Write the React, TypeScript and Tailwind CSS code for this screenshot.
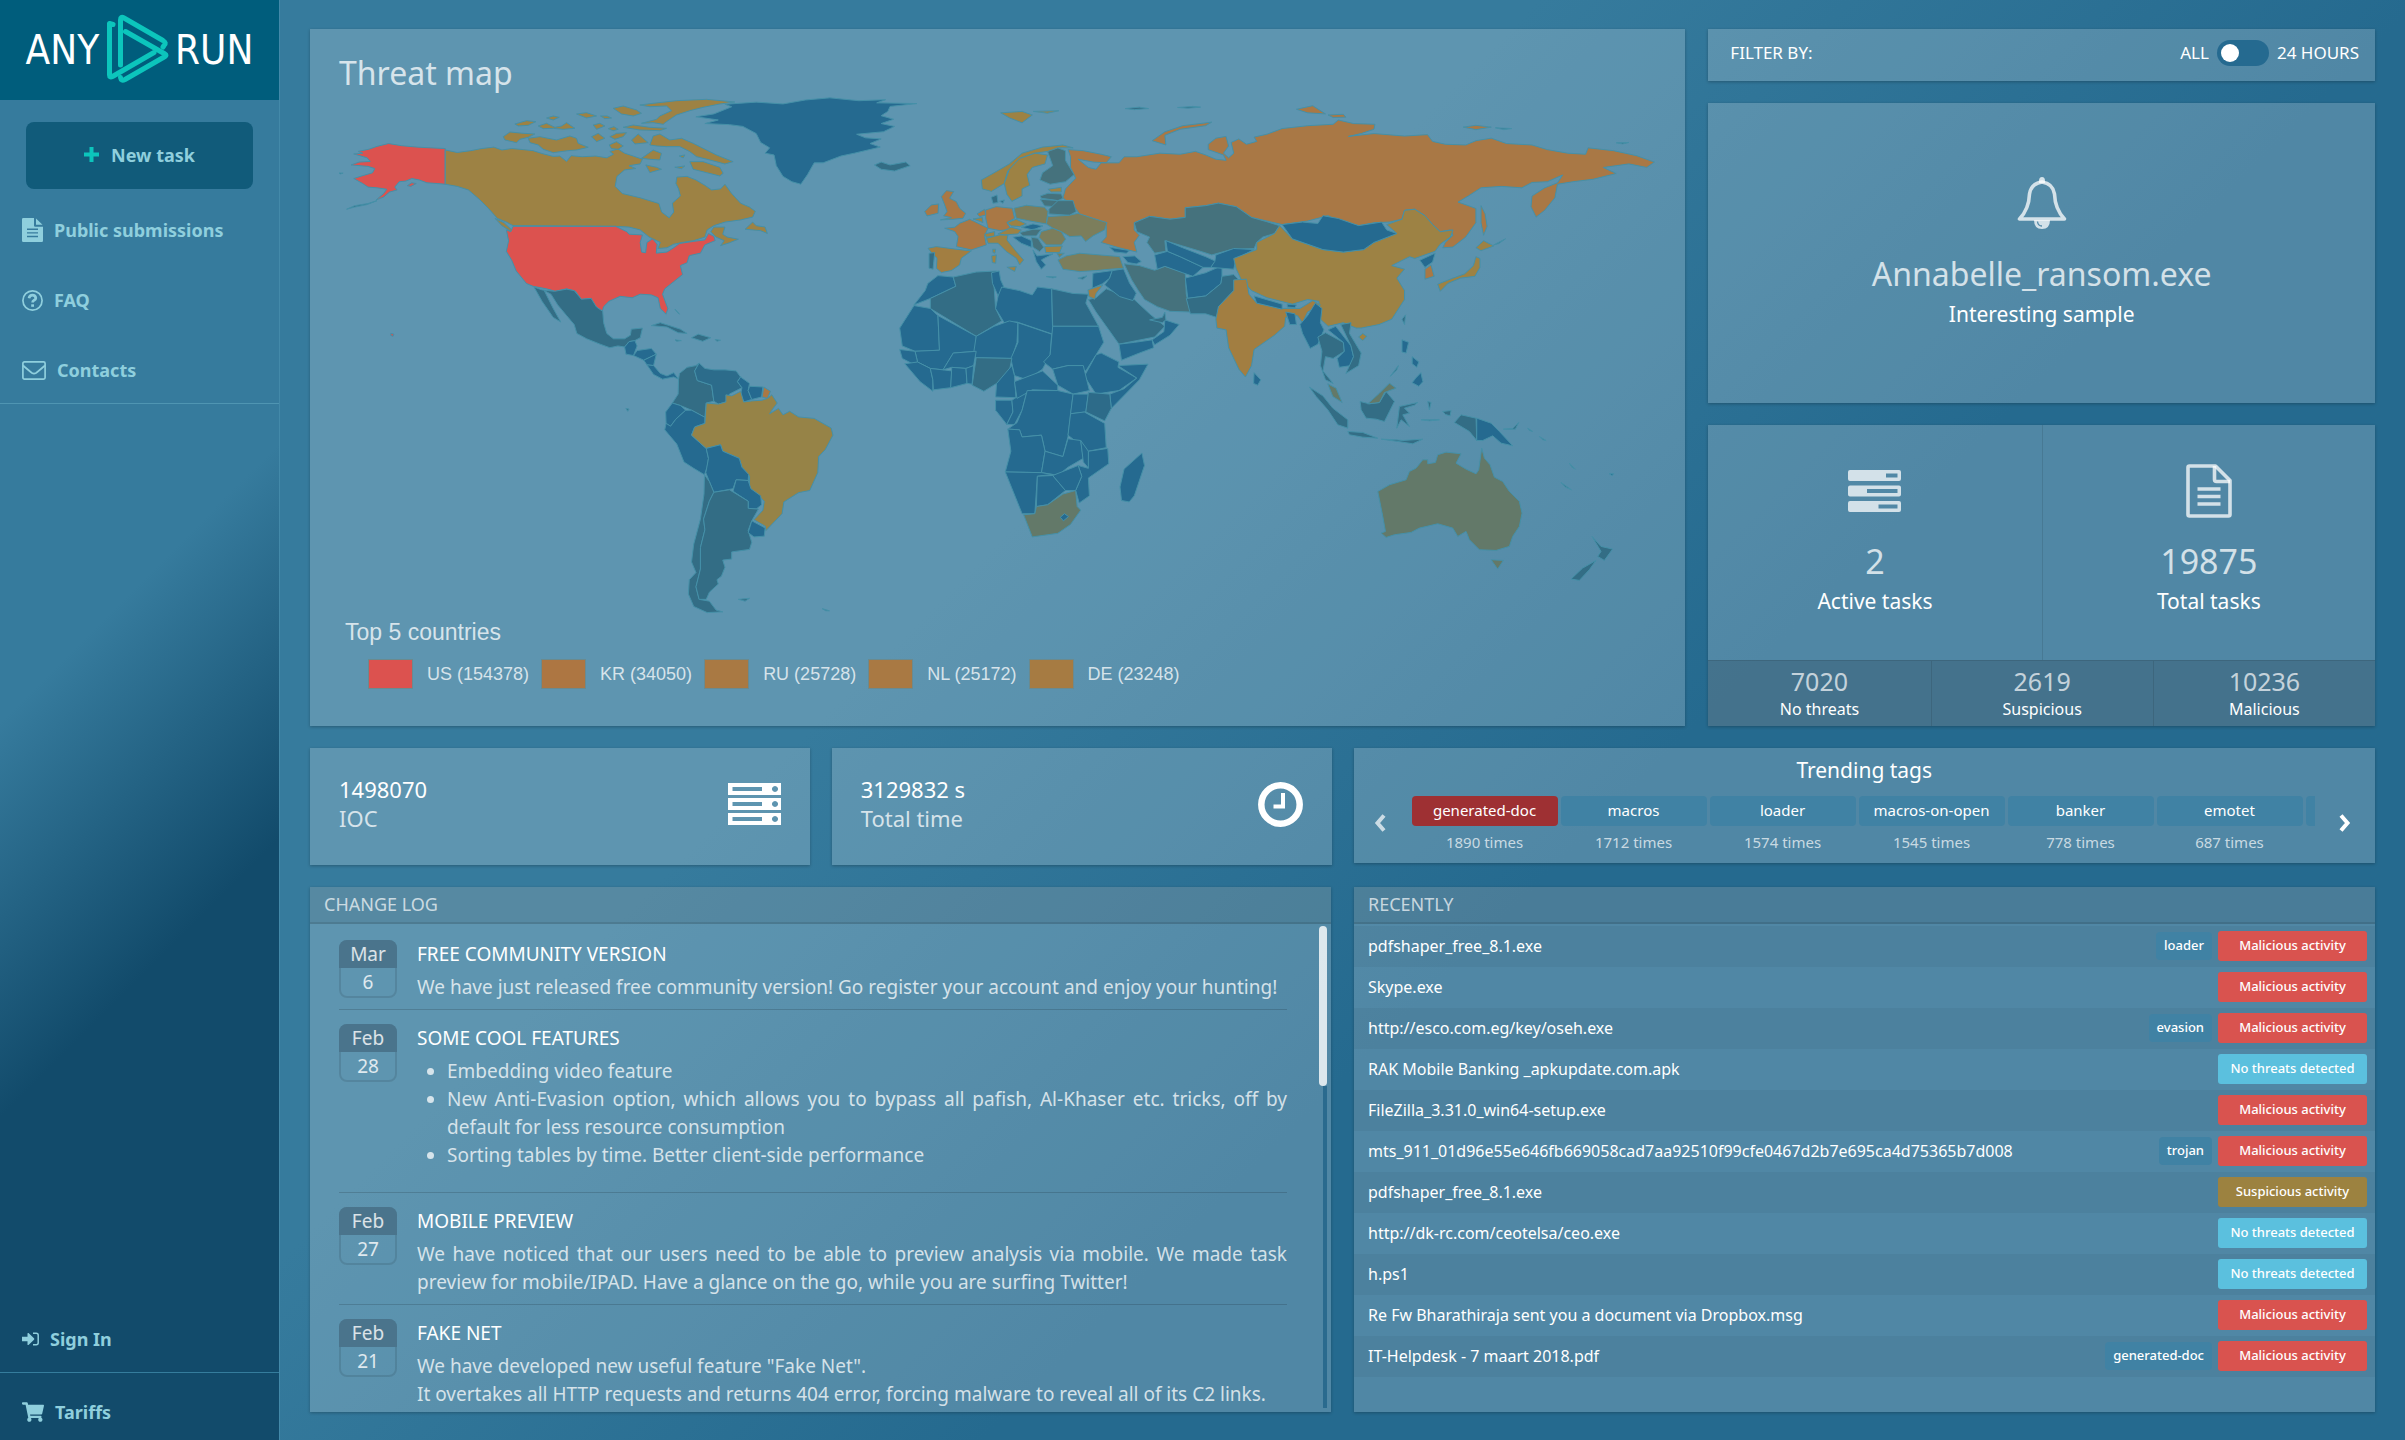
import { useState } from "react";
import type { ReactNode } from "react";
import { FaShoppingCart } from "react-icons/fa";

type Shape = [fill: string, d: string];

interface MapLayer {
  transform: string;
  shapes: Shape[];
}

interface LogEntry {
  month: string;
  day: number;
  title: string;
  body: ReactNode;
}

type Verdict = "malicious" | "suspicious" | "clean";

const NONE = "#256a90";
const LOW = "#336d85";
const MILD = "#45727d";
const SOME = "#637969";
const MID = "#7c7e5c";
const HIGH = "#9d8244";
const MORE = "#a27e41";
const HOT = "#a97845";
const TOP = "#dc524f";

// Each layer has its own drawing grid, the transform puts it on the world map
const MAP_LAYERS: MapLayer[] = [
  {
    // Americas
    transform: "translate(310 80) scale(0.44643 0.35714)",
    shapes: [
      [TOP, "M98,207 118,205 108,200 132,194 150,186 176,178 205,184 240,188 270,190 303,192 303,292 285,290 262,288 245,280 228,276 215,283 200,285 190,300 195,308 178,314 165,328 148,336 165,318 172,306 150,302 130,300 118,290 98,276 118,268 140,260 145,248 130,242 92,238 110,230 135,228 128,218Z"],
      [TOP, "M218,296 228,288 238,290 226,298Z"],
      [LOW, "M82,362 100,352 130,346 150,338 128,349 100,356Z"],
      [LOW, "M62,260 74,261 68,263Z"],
      [TOP, "M181,710 188,712 186,718 181,716Z"],
      [HIGH, "M303,196 330,203 360,198 385,192 412,188 430,196 452,192 478,195 500,198 520,206 545,214 560,213 575,228 585,212 610,215 640,213 665,218 680,208 672,200 690,193 705,205 722,212 745,222 740,235 715,240 730,248 705,252 688,270 684,298 700,318 740,330 782,346 788,370 805,386 815,370 812,345 830,325 826,305 820,290 822,272 845,270 865,280 885,295 900,308 920,305 930,292 945,318 965,345 985,356 998,368 992,384 965,392 930,398 905,408 890,420 885,440 860,450 835,455 815,460 800,470 780,472 785,455 760,440 740,420 715,412 685,410 455,408 440,398 420,388 400,360 380,335 355,308 330,298 303,292Z"],
      [HIGH, "M905,412 930,412 925,432 935,440 960,446 940,456 920,464 928,450 910,440 898,425Z"],
      [HIGH, "M975,418 992,398 1000,408 1020,412 1025,430 1010,422Z"],
      [HIGH, "M415,388 435,400 452,420 455,428 430,408Z"],
      [TOP, "M455,410 685,410 710,425 715,432 745,434 740,455 743,482 752,484 755,455 768,445 778,460 776,485 800,482 815,470 828,458 860,452 885,448 893,430 905,438 908,450 885,462 875,485 850,492 845,512 830,520 835,545 815,565 795,585 790,600 802,640 798,656 785,640 780,610 765,602 740,600 722,610 695,606 670,620 658,635 655,648 640,635 630,612 608,615 595,592 575,585 550,592 530,585 500,578 485,570 462,535 452,505 440,480 445,450 440,420 450,425Z"],
      [LOW, "M502,580 520,588 548,592 575,586 592,590 608,614 630,612 642,636 656,648 658,680 665,710 680,725 705,725 718,715 720,698 745,695 740,722 728,730 715,733 705,748 690,745 672,750 650,740 620,725 598,710 592,685 575,660 555,630 540,600 525,590 545,640 562,678 545,665 520,620Z"],
      [NONE, "M705,748 715,733 728,730 733,745 725,772 708,768Z"],
      [NONE, "M733,758 765,752 776,768 748,785 725,772Z"],
      [NONE, "M748,785 776,768 770,800 755,798Z"],
      [NONE, "M755,798 770,800 785,822 800,829 815,820 826,838 815,832 790,838 770,825Z"],
      [LOW, "M765,688 785,680 805,688 830,698 845,710 825,708 800,692Z"],
      [LOW, "M855,722 870,712 898,722 880,732Z"],
      [LOW, "M818,728 832,730 822,732Z"],
      [LOW, "M908,727 920,729 912,732Z"],
      [LOW, "M818,642 828,656 824,652Z"],
      [LOW, "M826,838 828,822 845,805 865,800 872,793 862,815 868,842 900,855 905,900 888,905 885,945 855,925 830,912 812,905 825,880Z"],
      ["#2c6c8b", "M872,793 885,808 905,812 930,812 955,815 965,832 958,845 968,862 940,880 932,902 915,908 905,900 900,855 868,842 862,815Z"],
      [NONE, "M965,832 985,850 982,870 990,895 972,902 965,880 968,862 958,845Z"],
      [NONE, "M985,858 1015,860 1012,888 990,895 982,870Z"],
      [HOT, "M1017,860 1032,872 1025,892 1013,888Z"],
      [NONE, "M812,905 830,912 842,925 820,950 808,970 798,962 797,930Z"],
      [NONE, "M842,925 855,925 885,945 885,962 862,972 855,995 875,1018 888,1032 893,1060 890,1085 884,1106 860,1088 838,1070 822,1020 795,980 798,962 808,970 820,950Z"],
      ["#968347", "M888,905 915,908 932,902 932,882 945,885 965,872 972,902 990,899 1013,897 1025,892 1035,882 1047,905 1035,925 1030,935 1050,920 1060,938 1075,928 1095,944 1130,948 1168,975 1172,995 1155,1035 1140,1055 1138,1100 1120,1150 1095,1156 1062,1182 1058,1215 1022,1262 1020,1250 995,1232 1015,1205 1018,1180 1005,1165 985,1145 985,1110 968,1085 962,1060 925,1040 920,1022 888,1032 875,1018 855,995 862,972 885,962Z"],
      [NONE, "M888,1032 920,1022 925,1040 962,1060 968,1085 983,1105 982,1122 955,1120 948,1145 905,1155 895,1125 887,1100 893,1060Z"],
      [NONE, "M955,1120 982,1122 988,1145 1010,1165 1012,1190 1000,1202 982,1200 982,1180 948,1152Z"],
      [LOW, "M884,1106 895,1125 905,1155 895,1180 882,1230 885,1260 875,1310 875,1370 865,1420 872,1455 895,1460 910,1485 925,1490 890,1492 860,1475 848,1440 850,1400 865,1380 855,1350 860,1300 875,1230 883,1160Z"],
      [LOW, "M905,1155 940,1148 982,1180 982,1200 1005,1202 990,1235 982,1262 990,1295 985,1315 945,1322 945,1342 925,1345 930,1365 922,1390 912,1400 915,1412 895,1435 888,1455 872,1455 865,1420 875,1370 875,1310 885,1260 882,1230 895,1180Z"],
      [NONE, "M990,1235 1020,1255 1018,1278 995,1280 982,1268Z"],
      [LOW, "M960,1455 985,1452 975,1460Z"],
      [LOW, "M1148,1481 1164,1487 1156,1487Z"],
      [NONE, "M865,103 905,95 945,75 930,68 1000,62 1060,67 1110,56 1165,50 1230,58 1290,55 1270,64 1360,66 1300,74 1295,88 1280,100 1308,110 1280,122 1310,130 1285,145 1225,152 1245,162 1280,165 1255,178 1278,188 1220,205 1190,213 1150,232 1130,232 1115,265 1100,292 1080,285 1060,270 1045,240 1040,210 1020,205 1030,190 1010,175 1000,150 970,130 940,125 885,122 915,112Z"],
      [LOW, "M1265,238 1280,230 1300,238 1335,230 1345,240 1310,255 1280,250Z"],
      [LOW, "M708,920 715,922 712,928Z"],
    ],
  },
  {
    // Canadian arctic
    transform: "translate(490 90) scale(0.33333)",
    shapes: [
      [HIGH, "M450,45 490,40 560,32 650,28 735,36 690,42 640,52 600,62 560,75 545,85 530,95 520,103 490,98 455,100 500,88 510,78 545,62 530,48 480,50Z"],
      [HIGH, "M370,55 400,48 440,60 455,70 430,78 395,72Z"],
      [HIGH, "M400,112 430,105 480,112 530,115 510,122 450,120Z"],
      [HIGH, "M40,140 60,126 100,130 135,132 115,142 90,148 80,158 45,150Z"],
      [HIGH, "M115,145 150,140 200,150 240,138 260,145 265,160 295,172 260,180 235,182 190,188 160,178 145,165 120,158Z"],
      [HIGH, "M75,102 110,92 138,95 115,106 85,108Z"],
      [HIGH, "M145,108 170,100 195,112 215,108 230,98 255,115 220,118 190,115 160,116Z"],
      [HIGH, "M170,84 190,78 208,82 190,90Z"],
      [HIGH, "M310,105 330,100 345,108 320,118Z"],
      [HIGH, "M260,72 290,68 320,78 290,84Z"],
      [HIGH, "M332,78 352,78 365,84 345,86Z"],
      [HIGH, "M355,116 372,110 385,118 370,122Z"],
      [HIGH, "M305,140 325,130 345,145 320,155Z"],
      [HIGH, "M360,140 380,130 410,128 400,140 375,148Z"],
      [HIGH, "M358,165 380,155 400,168 385,178 365,176Z"],
      [HIGH, "M425,150 445,132 460,145 475,158 435,162Z"],
      [HIGH, "M480,165 490,138 510,132 540,150 575,145 610,160 650,180 680,195 730,215 705,222 660,210 620,200 600,185 570,170 530,170 500,168Z"],
      [HIGH, "M600,215 640,215 690,232 700,250 690,258 650,248 610,238Z"],
      [HIGH, "M455,205 490,180 515,190 510,210 480,208Z"],
      [HIGH, "M468,225 500,232 515,238 480,248Z"],
      [HIGH, "M555,232 585,228 575,236Z"],
      [HIGH, "M568,198 585,195 580,204Z"],
    ],
  },
  {
    // Asia and Africa
    transform: "translate(900 80) scale(0.5102 0.35714)",
    shapes: [
      [HOT, "M330,195 360,198 395,208 415,215 405,232 380,230 350,222 370,245 385,250 395,232 430,232 440,215 465,215 510,205 550,208 580,200 600,210 620,222 640,225 635,210 605,195 605,180 620,163 640,158 645,185 635,205 645,218 655,205 650,175 665,165 680,180 700,172 695,160 720,152 750,136 800,128 850,124 860,112 890,122 932,124 930,138 905,150 880,158 930,150 990,157 1035,153 1045,172 1070,180 1110,182 1130,170 1160,163 1190,178 1240,182 1270,195 1310,205 1345,208 1350,190 1400,198 1445,212 1480,230 1465,245 1430,235 1405,240 1380,245 1405,262 1360,278 1320,285 1290,292 1285,330 1265,365 1248,384 1238,355 1240,325 1265,302 1290,288 1300,266 1270,285 1240,287 1220,302 1180,298 1140,302 1115,325 1095,342 1115,352 1130,360 1130,400 1110,440 1085,468 1065,470 1070,455 1085,435 1080,420 1060,425 1045,405 1030,380 1010,362 990,365 985,390 960,398 930,400 900,408 860,395 840,380 800,395 750,405 720,395 690,385 660,355 625,345 600,352 560,358 560,385 530,390 490,382 460,400 460,420 470,435 460,455 465,482 430,470 395,455 405,440 405,410 380,400 355,380 345,360 320,330 325,305 345,275 335,245 335,215Z"],
      [HOT, "M1140,352 1148,375 1152,410 1145,435 1140,400Z"],
      [HOT, "M495,170 520,145 555,128 612,118 600,128 550,138 520,155 522,182Z"],
      [HIGH, "M198,92 240,88 260,98 240,120 215,106Z"],
      [HIGH, "M262,88 312,86 290,93Z"],
      [HOT, "M778,82 810,72 835,95 800,92Z"],
      [HOT, "M840,98 870,96 875,104 850,105Z"],
      [HOT, "M1105,132 1130,127 1160,132 1130,139Z"],
      [LOW, "M1168,134 1200,136 1185,139Z"],
      [LOW, "M1405,176 1430,175 1418,179Z"],
      [LOW, "M442,80 470,76 488,80 460,83Z"],
      [LOW, "M545,77 575,74 590,76 565,79Z"],
      [MILD, "M290,200 310,190 325,198 325,225 342,265 325,285 295,292 275,280 280,260 300,240Z"],
      [HIGH, "M160,280 185,260 215,235 240,205 280,188 320,182 340,190 310,190 290,200 265,205 235,220 212,255 205,290 180,312 162,305Z"],
      [HIGH, "M205,290 215,250 235,220 265,205 290,210 285,235 260,245 250,265 255,295 240,305 240,325 220,340 210,320Z"],
      [MILD, "M460,400 490,382 530,390 560,385 560,358 600,352 625,345 660,355 690,385 720,397 745,408 735,430 712,440 700,455 695,472 650,475 612,490 590,480 555,465 520,450 522,480 500,485 485,455 490,440 465,425Z"],
      [LOW, "M370,615 385,610 405,585 460,615 490,655 520,690 500,720 430,740 410,700 385,650Z"],
      [NONE, "M430,740 460,735 495,728 498,750 470,765 435,785Z"],
      [NONE, "M520,672 548,685 530,715 500,742 495,728 518,705Z"],
      [LOW, "M490,672 515,665 520,650 522,672 515,680Z"],
      [MILD, "M440,515 470,520 500,533 520,522 560,540 562,600 570,650 530,648 505,635 480,615 468,590 455,560Z"],
      [NONE, "M560,555 600,540 632,520 632,550 630,570 600,605 565,612Z"],
      [NONE, "M500,490 525,480 550,495 595,525 575,550 555,540 520,522 505,530Z"],
      [NONE, "M522,450 555,470 600,495 620,508 610,525 595,525 550,495 525,480Z"],
      [NONE, "M620,490 655,472 695,475 660,500 655,530 610,525 618,508Z"],
      [LOW, "M562,612 600,605 630,570 632,550 655,545 665,560 655,590 625,635 628,668 600,655 570,655Z"],
      [HIGH, "M655,500 700,475 700,455 735,430 745,408 770,445 830,475 870,482 910,475 930,455 975,430 955,405 985,390 990,365 1010,362 1030,380 1045,405 1060,425 1085,420 1080,440 1060,460 1050,480 1010,500 1000,495 965,520 990,530 975,555 990,590 990,615 965,670 940,685 905,695 895,695 870,680 840,690 825,670 822,620 800,615 770,628 720,610 690,590 670,560 660,530Z"],
      [NONE, "M750,405 790,398 820,402 830,380 860,388 900,408 945,398 955,420 975,430 930,455 910,475 870,482 830,475 770,445Z"],
      [HIGH, "M900,720 908,710 916,718 908,730Z"],
      [MORE, "M655,560 680,558 685,600 700,625 750,640 760,640 785,640 810,618 825,630 800,650 790,680 780,660 757,665 755,690 735,715 695,755 690,800 678,832 665,810 645,750 640,700 622,695 620,670 625,635 655,590Z"],
      [NONE, "M695,605 750,628 750,642 700,625Z"],
      [NONE, "M760,628 778,630 775,638 760,636Z"],
      [NONE, "M757,650 775,655 778,685 765,685Z"],
      [NONE, "M785,685 800,660 815,625 828,640 825,680 832,700 820,740 805,752 790,710Z"],
      [LOW, "M820,720 835,708 870,735 872,760 850,780 835,775 830,815 850,850 835,840 825,800 828,760Z"],
      [NONE, "M840,700 855,690 885,745 890,775 885,800 862,805 858,780 872,760 870,735Z"],
      [LOW, "M865,685 885,680 882,710 905,765 900,800 875,822 890,775 885,745Z"],
      [NONE, "M695,820 708,840 702,855 694,850Z"],
      [LOW, "M985,670 992,658 990,685Z"],
      [NONE, "M985,728 998,735 993,765 985,762Z"],
      [NONE, "M1005,775 1018,790 1014,805 1005,795Z"],
      [NONE, "M1012,835 1022,820 1026,845 1018,858 1005,848Z"],
      [LOW, "M962,830 978,800 975,812Z"],
      [NONE, "M1020,505 1050,485 1045,510 1030,525Z"],
      [HOT, "M1030,530 1042,518 1048,550 1030,558Z"],
      [HIGH, "M1130,495 1138,500 1138,525 1128,550 1100,555 1075,570 1060,592 1055,572 1085,555 1108,543 1125,520Z"],
      [HIGH, "M1130,470 1145,450 1165,465 1140,478Z"],
      [LOW, "M1165,462 1188,445 1175,458Z"],
      [NONE, "M75,548 105,552 110,578 60,612 28,630 50,590 55,570Z"],
      [LOW, "M105,552 150,538 190,535 185,575 188,640 200,675 150,718 60,640 60,612 110,578Z"],
      [NONE, "M180,540 195,535 198,560 205,582 193,605 182,570Z"],
      [NONE, "M200,580 235,590 260,602 270,580 298,585 300,712 230,678 205,680 188,640 193,605Z"],
      ["#2d6b89", "M298,585 340,598 370,600 365,625 390,690 300,690Z"],
      [NONE, "M0,695 28,632 60,640 75,660 78,757 30,760 5,745Z"],
      [NONE, "M75,660 150,718 150,760 105,765 85,812 60,808 35,790 30,760 78,757Z"],
      [NONE, "M150,718 185,690 215,675 232,680 230,735 220,780 150,778 145,765Z"],
      [NONE, "M232,680 298,712 295,770 280,810 250,840 225,828 218,780 232,735Z"],
      [NONE, "M300,690 390,690 400,735 385,770 365,815 330,800 300,810 282,790 295,770Z"],
      [NONE, "M395,765 430,790 428,805 465,835 430,870 385,880 362,830 385,770Z"],
      [NONE, "M428,800 487,796 470,840 415,920 412,880 440,865 465,835Z"],
      [NONE, "M0,755 30,760 35,790 25,795 5,780Z"],
      [NONE, "M10,795 35,790 60,808 65,840 65,872 40,845Z"],
      [NONE, "M60,808 85,812 102,815 100,862 66,868 65,840Z"],
      [NONE, "M85,812 105,765 150,760 145,800 130,808 102,805Z"],
      [NONE, "M102,805 130,808 132,850 100,862Z"],
      [NONE, "M130,808 145,800 142,852 132,850Z"],
      [LOW, "M150,778 220,780 215,815 190,850 165,872 142,855Z"],
      [NONE, "M190,850 220,800 225,828 228,890 188,888Z"],
      [NONE, "M188,897 220,897 222,930 210,965 188,925Z"],
      [NONE, "M220,897 250,870 240,925 225,965 210,965 222,930Z"],
      [NONE, "M225,845 280,815 310,855 310,870 260,868 230,892Z"],
      [NONE, "M300,810 330,800 360,800 372,870 340,880 310,855Z"],
      [NONE, "M250,870 310,870 340,880 335,940 330,1000 320,1055 285,1040 278,995 240,1000 235,980 212,978 230,960 240,925Z"],
      [NONE, "M340,880 370,880 365,930 335,935Z"],
      ["#2d6b89", "M370,875 412,880 415,920 402,955 365,930Z"],
      [NONE, "M335,935 362,930 402,962 405,1030 370,1040 330,995Z"],
      [NONE, "M212,978 235,980 240,1000 278,995 285,1040 278,1100 207,1098 218,1040Z"],
      [NONE, "M285,1040 320,1055 330,1005 355,1010 360,1060 330,1085 310,1108 278,1100Z"],
      [NONE, "M355,1010 370,1040 372,1090 360,1070Z"],
      [NONE, "M370,1040 408,1032 410,1075 370,1115 372,1165 352,1185 345,1150 357,1110 350,1080 370,1088Z"],
      [NONE, "M207,1098 278,1100 300,1105 270,1110 265,1215 240,1215Z"],
      [NONE, "M270,1110 300,1108 325,1150 290,1190 268,1195Z"],
      [NONE, "M300,1108 350,1080 357,1110 345,1150 325,1150Z"],
      [SOME, "M243,1218 265,1215 268,1195 290,1190 320,1160 345,1150 348,1195 355,1205 335,1245 310,1270 260,1280Z"],
      [NONE, "M315,1225 323,1215 331,1223 321,1235Z"],
      [NONE, "M475,1045 480,1080 460,1165 450,1182 435,1178 432,1140 440,1090Z"],
    ],
  },
  {
    // Europe and the Levant
    transform: "translate(920 150) scale(0.33333)",
    shapes: [
      [LOW, "M215,142 232,135 235,158 220,160Z"],
      [LOW, "M240,154 254,150 250,160Z"],
      [HIGH, "M385,118 425,112 425,126 395,126Z"],
      [MILD, "M362,138 385,130 425,132 430,145 415,152 365,145Z"],
      [MILD, "M362,148 415,152 405,170 375,168Z"],
      [MILD, "M388,178 415,152 460,152 470,185 450,196 388,192Z"],
      [MID, "M283,175 320,166 375,172 385,185 380,222 340,215 290,205Z"],
      [HOT, "M198,180 230,170 278,175 285,205 262,218 275,238 240,242 205,235 198,205Z"],
      [HOT, "M172,192 195,178 198,195 180,200Z"],
      [HIGH, "M160,207 188,203 190,218Z"],
      [HOT, "M75,235 105,232 120,220 150,208 165,215 205,235 195,258 200,285 155,300 110,290 115,260 105,245Z"],
      [MORE, "M25,295 50,290 110,298 155,303 125,325 120,345 95,362 65,368 50,355 52,325 35,308Z"],
      [LOW, "M28,310 45,308 40,358 28,355Z"],
      [HOT, "M62,210 95,203 72,198 82,185 75,165 65,140 80,122 102,125 90,145 110,155 120,175 138,190 130,205 100,208Z"],
      [HOT, "M15,185 35,165 57,162 55,190 22,198Z"],
      [HIGH, "M195,252 225,245 225,258 200,262Z"],
      [HIGH, "M235,252 275,232 305,240 295,252 255,255Z"],
      [HIGH, "M262,218 290,208 320,222 300,230 275,228Z"],
      [HIGH, "M200,265 240,255 265,256 262,270 290,305 312,330 300,345 290,325 260,305 235,280 205,280Z"],
      [HIGH, "M262,352 290,350 285,365Z"],
      [HIGH, "M216,318 230,315 228,340 218,338Z"],
      [HIGH, "M219,298 228,298 226,310 220,308Z"],
      [NONE, "M305,232 340,222 370,228 340,240Z"],
      [MILD, "M300,248 340,238 365,238 350,258 310,258Z"],
      [MID, "M365,245 400,235 425,245 438,268 425,285 380,285 358,262Z"],
      [HIGH, "M375,290 428,288 420,308 378,308Z"],
      [NONE, "M280,262 305,258 335,272 335,292 305,280Z"],
      [MILD, "M335,262 355,265 372,292 360,305 340,292Z"],
      [NONE, "M340,300 352,318 400,312 380,322 365,330 378,345 365,358 350,335Z"],
      [MID, "M385,200 450,196 475,190 520,205 562,218 555,240 520,258 498,275 485,258 450,260 425,245 400,235 380,222Z"],
      [MID, "M415,330 440,318 480,310 540,315 600,320 612,355 570,358 530,362 480,365 430,358Z"],
      [MID, "M412,310 434,310 419,322Z"],
      [NONE, "M570,292 630,302 620,310 585,306Z"],
      [NONE, "M610,320 645,318 665,335 650,342 625,338Z"],
      [LOW, "M380,380 410,381 400,384Z"],
      [LOW, "M475,385 502,378 490,388Z"],
      [NONE, "M520,370 578,362 570,385 548,402 518,415Z"],
      ["#2a6b8d", "M578,362 612,357 630,400 650,430 640,452 600,440 555,405 570,385Z"],
      [MORE, "M505,420 550,405 530,430 525,448 508,440Z"],
    ],
  },
  {
    // Oceania
    transform: "translate(1280 370) scale(0.33333)",
    shapes: [
      [LOW, "M90,52 130,78 160,115 205,150 205,175 175,165 145,120 110,80Z"],
      [LOW, "M205,185 250,188 295,205 250,202 210,195Z"],
      [LOW, "M305,208 350,210 370,212 430,208 400,222 350,214Z"],
      [LOW, "M242,95 270,102 300,98 320,65 345,95 330,125 315,155 290,148 260,145 245,120Z"],
      [SOME, "M265,102 300,70 330,40 350,55 315,68 300,98Z"],
      [SOME, "M145,42 170,55 188,98 160,80Z"],
      [LOW, "M352,175 360,110 415,98 405,106 375,115 390,130 370,135 390,170 365,150Z"],
      [LOW, "M445,95 455,98 450,120Z"],
      [LOW, "M425,150 480,150 450,153Z"],
      [LOW, "M490,125 515,122 512,138 498,134Z"],
      [LOW, "M525,158 545,135 590,145 592,212 570,185Z"],
      [NONE, "M592,145 635,160 660,185 700,228 665,220 640,198 610,212 592,212Z"],
      [LOW, "M672,178 700,176 718,158 708,178Z"],
      [LOW, "M745,175 760,185 750,182Z"],
      [LOW, "M780,200 800,212 790,210Z"],
      [LOW, "M845,338 876,360 858,352Z"],
      [LOW, "M870,280 888,298 878,292Z"],
      [NONE, "M990,312 1003,312 998,318Z"],
      [SOME, "M295,365 330,345 380,330 390,305 410,295 430,270 445,270 445,282 468,278 475,255 500,247 545,252 530,280 560,298 590,312 598,300 607,235 615,265 632,285 645,322 670,335 690,365 720,395 728,430 720,470 700,500 690,530 650,542 600,540 570,510 560,485 535,500 520,475 475,462 420,475 395,488 345,495 320,503 305,490 318,485 310,440Z"],
      [SOME, "M635,570 672,572 655,598Z"],
      [LOW, "M938,500 965,530 1000,538 975,572 955,560 965,545Z"],
      [LOW, "M950,572 930,600 900,632 875,628 910,595Z"],
    ],
  },
];

const TOP_COUNTRIES = [
  { label: "US (154378)", swatch: "bg-[#dc524f]" },
  { label: "KR (34050)", swatch: "bg-[#ad7642]" },
  { label: "RU (25728)", swatch: "bg-[#a97943]" },
  { label: "NL (25172)", swatch: "bg-[#a97943]" },
  { label: "DE (23248)", swatch: "bg-[#a67b42]" },
];

const TRENDING = [
  { tag: "generated-doc", times: 1890 },
  { tag: "macros", times: 1712 },
  { tag: "loader", times: 1574 },
  { tag: "macros-on-open", times: 1545 },
  { tag: "banker", times: 778 },
  { tag: "emotet", times: 687 },
];

const VERDICTS: Record<Verdict, { label: string; className: string }> = {
  malicious: { label: "Malicious activity", className: "bg-[#d9534f]" },
  suspicious: { label: "Suspicious activity", className: "bg-[#9c8240]" },
  clean: { label: "No threats detected", className: "bg-[#5bc0de]" },
};

const RECENT: { name: string; tag?: string; verdict: Verdict }[] = [
  { name: "pdfshaper_free_8.1.exe", tag: "loader", verdict: "malicious" },
  { name: "Skype.exe", verdict: "malicious" },
  { name: "http://esco.com.eg/key/oseh.exe", tag: "evasion", verdict: "malicious" },
  { name: "RAK Mobile Banking _apkupdate.com.apk", verdict: "clean" },
  { name: "FileZilla_3.31.0_win64-setup.exe", verdict: "malicious" },
  {
    name: "mts_911_01d96e55e646fb669058cad7aa92510f99cfe0467d2b7e695ca4d75365b7d008",
    tag: "trojan",
    verdict: "malicious",
  },
  { name: "pdfshaper_free_8.1.exe", verdict: "suspicious" },
  { name: "http://dk-rc.com/ceotelsa/ceo.exe", verdict: "clean" },
  { name: "h.ps1", verdict: "clean" },
  { name: "Re Fw Bharathiraja sent you a document via Dropbox.msg", verdict: "malicious" },
  { name: "IT-Helpdesk - 7 maart 2018.pdf", tag: "generated-doc", verdict: "malicious" },
];

const CHANGE_LOG: LogEntry[] = [
  {
    month: "Mar",
    day: 6,
    title: "FREE COMMUNITY VERSION",
    body: <p>We have just released free community version! Go register your account and enjoy your hunting!</p>,
  },
  {
    month: "Feb",
    day: 28,
    title: "SOME COOL FEATURES",
    body: (
      <ul className="mb-[15px] list-disc pl-[30px]">
        <li>Embedding video feature</li>
        <li>
          New Anti-Evasion option, which allows you to bypass all pafish, Al-Khaser etc. tricks, off by
          default for less resource consumption
        </li>
        <li>Sorting tables by time. Better client-side performance</li>
      </ul>
    ),
  },
  {
    month: "Feb",
    day: 27,
    title: "MOBILE PREVIEW",
    body: (
      <p>
        We have noticed that our users need to be able to preview analysis via mobile. We made task
        preview for mobile/IPAD. Have a glance on the go, while you are surfing Twitter!
      </p>
    ),
  },
  {
    month: "Feb",
    day: 21,
    title: "FAKE NET",
    body: (
      <>
        <p>We have developed new useful feature "Fake Net".</p>
        <p>It overtakes all HTTP requests and returns 404 error, forcing malware to reveal all of its C2 links.</p>
      </>
    ),
  },
];

/* Icons */

function LogoMark() {
  return (
    <svg viewBox="0 0 64 72" className="h-[72px] w-16" fill="none" stroke="#0cc5bc" strokeWidth="5" strokeLinejoin="round" strokeLinecap="round" aria-hidden="true">
      <path d="M8 10.500 4.500 9.500V61q0 3 3 1.500L49 38.500" />
      <path d="M15.500 51V6q0-4 3.500-2L58 26.500q4 2.500 1 5L58 33" />
      <path d="M20.500 18.500 60 41q2 1 0 2.500L20 66.500q-4 2-4.500-2" transform="translate(0 -1)" />
    </svg>
  );
}

function FileIcon() {
  return (
    <svg viewBox="0 0 21 24" className="h-6 w-[21px]" aria-hidden="true">
      <path fill="currentColor" fillRule="evenodd" d="M1.300 0H12v7.700q0 1.100 1.200 1.100H21v14q0 1.200-1.200 1.200H1.300Q0 24 0 22.800V1.200Q0 0 1.300 0ZM5 10.500v1.400h11v-1.400Zm0 3.700v1.400h11v-1.400Zm0 3.600v1.400h11v-1.400Z" />
      <path fill="currentColor" d="M14 .5 20.500 6.800H14Z" />
    </svg>
  );
}

function QuestionIcon() {
  return (
    <svg viewBox="0 0 21 21" className="size-[21px]" fill="none" stroke="currentColor" aria-hidden="true">
      <circle cx="10.500" cy="10.500" r="9.600" strokeWidth="1.700" />
      <path d="M7 8.200Q7.600 5.200 10.500 5.200T13.800 8Q13.800 9.300 12.200 10.200 10.600 11.200 10.600 12.600" strokeWidth="2.700" />
      <path d="M9.200 14.300h2.800v2.500H9.200z" fill="currentColor" stroke="none" />
    </svg>
  );
}

function EnvelopeIcon() {
  return (
    <svg viewBox="0 0 24 19" className="h-[19px] w-6" fill="none" stroke="currentColor" strokeWidth="1.700" aria-hidden="true">
      <rect x=".9" y=".9" width="22.200" height="17.200" rx="1.500" />
      <path d="M1 4.500Q8 10.500 10 12 12 13.200 14 12 16 10.500 23 4.500" />
    </svg>
  );
}

function SignInIcon() {
  return (
    <svg viewBox="0 0 17 14" className="h-3.5 w-[17px]" aria-hidden="true">
      <path fill="currentColor" d="M0 4.800h5.500V1.600q.1-1 1-.5L12 6.300q.7.700 0 1.400L6.500 12.900q-.9.500-1-.5V9.200H0Z" />
      <path fill="none" stroke="currentColor" strokeWidth="1.500" d="M11 1.200h3.200q2 0 2 2v7.600q0 2-2 2H11" />
    </svg>
  );
}

function BellIcon() {
  return (
    <svg viewBox="0 0 50 54" className="h-[54px] w-[50px]" aria-hidden="true">
      <path fill="none" stroke="currentColor" strokeWidth="3.600" strokeLinejoin="round" d="M25 6Q14 7.500 12.500 18 12 33 2.500 43H47.500Q38 33 37.500 18 36 7.500 25 6Z" />
      <path fill="currentColor" d="M22 5q0-4 3-4t3 4v2h-6ZM17 44h16q0 9-8 9t-8-9Z" />
      <path fill="none" stroke="#5289a8" strokeWidth="1.300" d="M20.500 45.500q.5 4.500 4.500 4.500" />
    </svg>
  );
}

function TasksIcon() {
  return (
    <svg viewBox="0 0 53 42" className="h-[42px] w-[53px]" fill="currentColor" fillRule="evenodd" aria-hidden="true">
      <path d="M2 0H51q2 0 2 2V9q0 2-2 2H2Q0 11 0 9V2Q0 0 2 0ZM38 3.600V7.400H49.500V3.600Z" />
      <path d="M2 15.500H51q2 0 2 2v7q0 2-2 2H2q-2 0-2-2v-7q0-2 2-2ZM19 19.100v3.800H49.500V19.100Z" />
      <path d="M2 31H51q2 0 2 2v7q0 2-2 2H2q-2 0-2-2V33q0-2 2-2ZM30.500 34.600v3.800h19V34.600Z" />
    </svg>
  );
}

function DocumentIcon() {
  return (
    <svg viewBox="0 0 46 54" className="h-[54px] w-[46px]" fill="none" stroke="currentColor" strokeWidth="3.600" strokeLinejoin="round" aria-hidden="true">
      <path d="M3.500 2H29.500L44 16.500V50.500q0 1.500-1.500 1.500H3.500Q2 52 2 50.500V3.500Q2 2 3.500 2Z" />
      <path d="M28.500 2V15.500q0 2 2 2H44M11.500 25h23M11.500 32.500h23M11.500 40h23" />
    </svg>
  );
}

function ServersIcon() {
  return (
    <svg viewBox="0 0 53 42" className="h-[42px] w-[53px]" fill="currentColor" fillRule="evenodd" aria-hidden="true">
      {[0, 15, 30].map((y) => (
        <path key={y} transform={`translate(0 ${y})`} d="M0 0H53V12H0ZM4.500 4V8H34V4ZM47 3a3 3 0 1 0 .01 0Z" />
      ))}
    </svg>
  );
}

function ClockIcon() {
  return (
    <svg viewBox="0 0 45 45" className="size-[45px]" fill="none" stroke="currentColor" aria-hidden="true">
      <circle cx="22.500" cy="22.500" r="19.200" strokeWidth="6.500" />
      <path d="M25 11v13.500H15.500" strokeWidth="4" />
    </svg>
  );
}

function Chevron({ direction }: { direction: "left" | "right" }) {
  return (
    <svg viewBox="0 0 12 18" className="h-[18px] w-3" fill="none" stroke="currentColor" strokeWidth="4" aria-hidden="true">
      <path d={direction === "left" ? "M10 1.500 3.500 9 10 16.500" : "M2 1.500 8.500 9 2 16.500"} />
    </svg>
  );
}

/* Layout pieces */

function Panel({ className = "", children }: { className?: string; children: ReactNode }) {
  return <section className={`bg-white/20 shadow-[0_1px_3px_rgba(0,0,0,0.25)] ${className}`}>{children}</section>;
}

function PanelHeader({ children }: { children: ReactNode }) {
  return (
    <h2 className="h-[37px] border-b-2 border-black/10 bg-black/8 px-3.5 text-lg leading-[35px] text-white/70">
      {children}
    </h2>
  );
}

function NavLink({ icon, children }: { icon: ReactNode; children: ReactNode }) {
  return (
    <a href="#" className="flex items-center gap-[11px] px-[22px] text-lg leading-7 font-bold text-[#8fcfdd] hover:text-white">
      {icon}
      {children}
    </a>
  );
}

function Sidebar() {
  return (
    <aside className="flex w-[280px] shrink-0 flex-col border-r border-[#4389a9] bg-[linear-gradient(135deg,#367b9d_42%,#124b6b_65%)]">
      <a href="#" aria-label="ANY RUN" className="flex h-[100px] items-center justify-center gap-1.5 bg-[#005d7c] font-['DejaVu_Sans_Condensed',sans-serif] text-[40px] leading-none text-white">
        <span>ANY</span>
        <LogoMark />
        <span>RUN</span>
      </a>
      <button type="button" className="mx-[26px] mt-[22px] flex h-[67px] items-center justify-center gap-3 rounded-lg bg-[#115b7a] pb-0.5 text-lg font-bold text-[#8fcfdd]">
        <svg viewBox="0 0 15 15" className="size-[15px]" aria-hidden="true">
          <path d="M7.500 0v15M0 7.500h15" stroke="#0cc5bc" strokeWidth="4" />
        </svg>
        New task
      </button>
      <nav className="mt-[27px] flex flex-col gap-[42px] border-b border-[#4f95b2] pb-[19px]">
        <NavLink icon={<FileIcon />}>Public submissions</NavLink>
        <NavLink icon={<QuestionIcon />}>FAQ</NavLink>
        <NavLink icon={<EnvelopeIcon />}>Contacts</NavLink>
      </nav>
      <nav className="mt-auto flex flex-col">
        <div className="border-b border-[#357d9d] pb-[19px]">
          <NavLink icon={<SignInIcon />}>Sign In</NavLink>
        </div>
        <div className="pt-[25px] pb-[15px]">
          <NavLink icon={<FaShoppingCart className="size-[22px]" aria-hidden="true" />}>Tariffs</NavLink>
        </div>
      </nav>
    </aside>
  );
}

function ThreatMap() {
  return (
    <Panel className="px-[29px] pt-5 pb-[37px]">
      <h1 className="text-[32px] leading-[48px] text-white/75">Threat map</h1>
      <svg viewBox="339 97 1318 519" className="w-full" role="img" aria-label="World map of threats by country">
        {MAP_LAYERS.map((layer) => (
          <g key={layer.transform} transform={layer.transform} stroke="#4590a8" strokeWidth="1" strokeLinejoin="round">
            {layer.shapes.map(([fill, d]) => (
              <path key={d} d={d} fill={fill} vectorEffect="non-scaling-stroke" />
            ))}
          </g>
        ))}
      </svg>
      <div className="font-['Liberation_Sans',Arial,sans-serif] text-white/75">
        <h2 className="pl-1.5 text-[23px] leading-8">Top 5 countries</h2>
        <ul className="mt-[11px] flex flex-wrap gap-3 pl-[29px]">
          {TOP_COUNTRIES.map((country) => (
            <li key={country.label} className="flex items-center gap-3.5 text-lg leading-[30px]">
              <span className={`h-[30px] w-[45px] border border-[#6a8a8f] ${country.swatch}`} />
              {country.label}
            </li>
          ))}
        </ul>
      </div>
    </Panel>
  );
}

function FilterBar() {
  const [lastDay, setLastDay] = useState(false);

  return (
    <Panel className="flex h-[52px] items-center justify-between pr-4 pb-1 pl-[22px] text-[17px] text-white">
      <span>FILTER BY:</span>
      <label className="flex items-center gap-2">
        ALL
        <input
          type="checkbox"
          role="switch"
          checked={lastDay}
          onChange={(e) => setLastDay(e.target.checked)}
          className="flex h-[26px] w-[52px] cursor-pointer appearance-none items-center rounded-full bg-[#256a90] px-1 before:size-[18px] before:rounded-full before:bg-white checked:justify-end"
        />
        24 HOURS
      </label>
    </Panel>
  );
}

function BigStat({ icon, value, label }: { icon: ReactNode; value: number; label: string }) {
  return (
    <div className="flex flex-col items-center border-black/10 pt-9 text-white/75 not-first:border-l">
      <div className="flex h-[60px] items-center">{icon}</div>
      <div className="mt-4 text-[34px] leading-12">{value}</div>
      <div className="text-[21px] leading-8 text-white">{label}</div>
    </div>
  );
}

function SmallStat({ value, label }: { value: number; label: string }) {
  return (
    <div className="flex flex-col items-center border-black/10 pt-1 not-first:border-l">
      <div className="text-[25px] leading-8 text-white/70">{value}</div>
      <div className="text-base leading-6 text-white">{label}</div>
    </div>
  );
}

function StatCard({ icon, value, label }: { icon: ReactNode; value: string; label: string }) {
  return (
    <Panel className="flex h-[117px] items-center justify-between px-[29px] pb-1 text-white">
      <div className="text-[22px] leading-[29px]">
        <div>{value}</div>
        <div className="text-white/75">{label}</div>
      </div>
      {icon}
    </Panel>
  );
}

function TrendingTags() {
  return (
    <Panel className="h-[115px] text-white">
      <h2 className="pt-1 text-center text-[21px] leading-9">Trending tags</h2>
      <div className="flex items-center pr-6 pl-5">
        <button type="button" aria-label="Previous tags" className="w-[38px] text-white/70">
          <Chevron direction="left" />
        </button>
        <ul className="mt-2 flex flex-1 gap-[3px] overflow-hidden">
          {TRENDING.map((item, i) => (
            <li key={item.tag} className="w-[146px] shrink-0 text-center text-[15px]">
              <a href="#" className={`block h-[30px] rounded leading-[28px] ${i === 0 ? "bg-[#9e3033]" : "bg-[#4082a4]"}`}>
                {item.tag}
              </a>
              <div className="leading-8 text-white/70">{item.times} times</div>
            </li>
          ))}
          <li className="h-[30px] w-[146px] shrink-0 rounded bg-[#4082a4]" />
        </ul>
        <button type="button" aria-label="Next tags" className="flex w-9 justify-end">
          <Chevron direction="right" />
        </button>
      </div>
    </Panel>
  );
}

function ChangeLog() {
  return (
    <Panel className="flex flex-col">
      <PanelHeader>CHANGE LOG</PanelHeader>
      <div className="flex flex-1 justify-between">
        <div className="flex-1 pt-0.5 pr-8 pl-[29px]">
          {CHANGE_LOG.map((entry) => (
            <article key={entry.title} className="flex gap-5 border-b border-black/15 pt-3.5 pb-2 last:border-b-0 last:pb-1">
              <div className="h-[58px] w-[58px] shrink-0 rounded-lg border-2 border-black/10 text-center text-[19px] leading-7 text-white/80">
                <div className="-mx-0.5 -mt-0.5 h-7 rounded-t-lg bg-[#4a748c]">{entry.month}</div>
                <div>{entry.day}</div>
              </div>
              <div className="flex-1 text-[19px] leading-7">
                <h3 className="mb-[5px] text-white">{entry.title}</h3>
                <div className="text-justify text-white/75">{entry.body}</div>
              </div>
            </article>
          ))}
        </div>
        <div className="mt-0.5 mr-1 mb-1 flex w-2 flex-col items-end">
          <div className="h-40 w-2 rounded-full bg-white/80" />
          <div className="w-1 flex-1 bg-[#2a6a8e]" />
        </div>
      </div>
    </Panel>
  );
}

function Recently() {
  return (
    <Panel>
      <PanelHeader>RECENTLY</PanelHeader>
      <table className="mt-0.5 w-full">
        <tbody>
          {RECENT.map((row, i) => (
            <tr key={i} className="h-[41px] odd:bg-black/4">
              <td className="pl-3.5 text-base leading-6 text-white">{row.name}</td>
              <td className="pr-2">
                <div className="flex items-center justify-end gap-1.5 text-[13px] font-medium text-white">
                  {row.tag && <span className="h-7 rounded bg-[#4082a4] px-2 leading-[26px]">{row.tag}</span>}
                  <span className={`h-[30px] w-[149px] rounded-[3px] text-center leading-[29px] ${VERDICTS[row.verdict].className}`}>
                    {VERDICTS[row.verdict].label}
                  </span>
                </div>
              </td>
            </tr>
          ))}
        </tbody>
      </table>
    </Panel>
  );
}

export default function App() {
  return (
    <div className="flex min-h-screen bg-[linear-gradient(135deg,#367b9d_40%,#256a8f_63%)] font-['Noto_Sans',sans-serif]">
      <Sidebar />
      <main className="flex flex-1 flex-col gap-[22px] px-[30px] pt-[29px] pb-[29px]">
        <div className="grid grid-cols-[1376fr_667fr] gap-[23px]">
          <ThreatMap />
          <div className="flex flex-col gap-[22px]">
            <FilterBar />
            <Panel className="flex flex-1 flex-col items-center justify-center text-white">
              <div className="text-white/75">
                <BellIcon />
              </div>
              <div className="mt-5 text-[32px] leading-12 text-white/75">Annabelle_ransom.exe</div>
              <div className="text-[21px] leading-8">Interesting sample</div>
            </Panel>
            <Panel className="flex flex-1 flex-col">
              <div className="grid flex-1 grid-cols-2">
                <BigStat icon={<TasksIcon />} value={2} label="Active tasks" />
                <BigStat icon={<DocumentIcon />} value={19875} label="Total tasks" />
              </div>
              <div className="grid h-[66px] grid-cols-3 border-t border-black/10 bg-black/15">
                <SmallStat value={7020} label="No threats" />
                <SmallStat value={2619} label="Suspicious" />
                <SmallStat value={10236} label="Malicious" />
              </div>
            </Panel>
          </div>
        </div>
        <div className="grid grid-cols-2 items-start gap-[22px]">
          <div className="grid grid-cols-2 gap-[22px]">
            <StatCard icon={<ServersIcon />} value="1498070" label="IOC" />
            <StatCard icon={<ClockIcon />} value="3129832 s" label="Total time" />
          </div>
          <TrendingTags />
        </div>
        <div className="grid flex-1 grid-cols-2 gap-[23px]">
          <ChangeLog />
          <Recently />
        </div>
      </main>
    </div>
  );
}
